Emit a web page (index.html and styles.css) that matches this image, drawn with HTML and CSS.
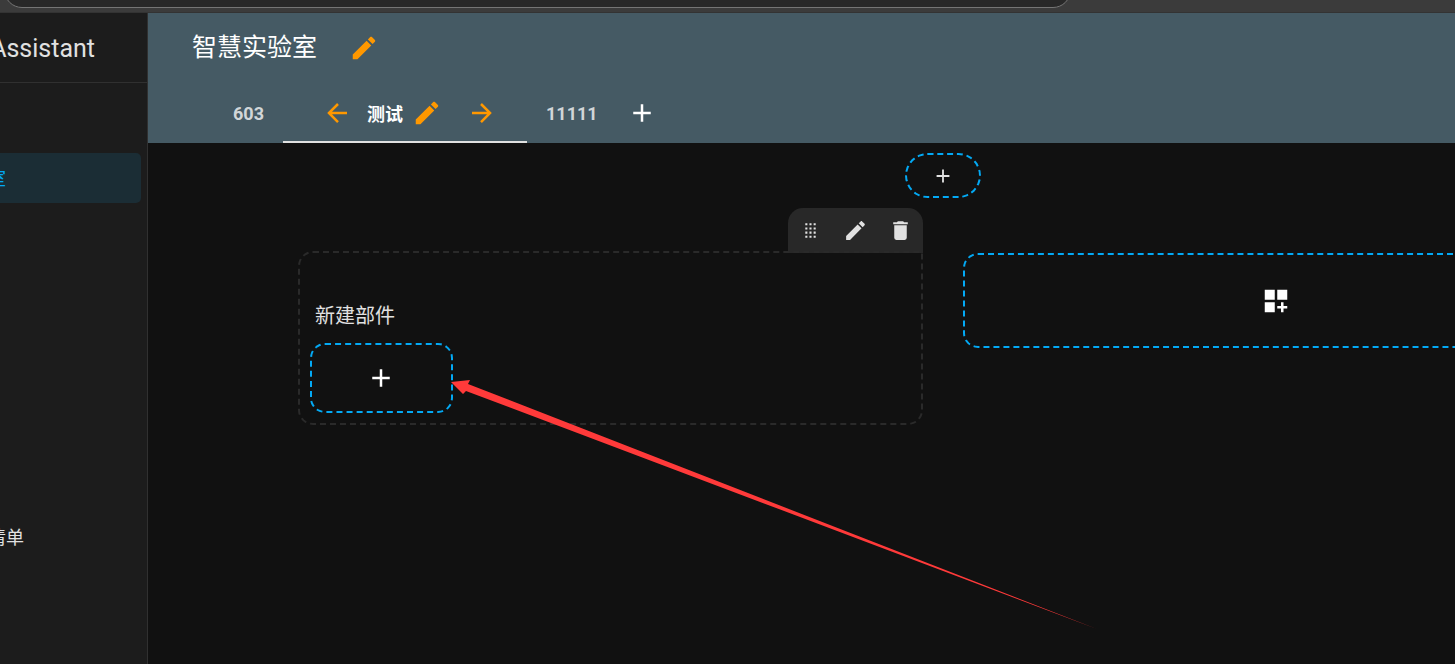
FILE: index.html
```html
<!DOCTYPE html>
<html lang="zh-CN">
<head>
	<meta charset="UTF-8">
	<title>智慧实验室</title>
	<link rel="stylesheet" href="styles.css">
</head>
<body>
	<div class="browser"><div class="address"></div></div>
	<div class="app">
		<aside class="sidebar">
			<div class="brand"><span>Home Assistant</span></div>
			<nav class="menu">
				<a class="item active" href="#">智慧实验室</a>
				<a class="item todo" href="#">待办清单</a>
			</nav>
		</aside>
		<main class="main">
			<header class="header">
				<div class="title">
					<h1>智慧实验室</h1>
					<button class="icon" aria-label="编辑标题">
						<svg viewBox="0 0 24 24"><path d="M20.71,7.04C21.1,6.65 21.1,6 20.71,5.63L18.37,3.29C18,2.9 17.35,2.9 16.96,3.29L15.12,5.12L18.87,8.87M3,17.25V21H6.75L17.81,9.93L14.06,6.18L3,17.25Z"/></svg>
					</button>
				</div>
				<div class="tabs">
					<a class="tab" href="#">603</a>
					<div class="tab current">
						<button class="icon" aria-label="左移">
							<svg viewBox="0 0 24 24"><path d="M20,11V13H8L13.5,18.5L12.08,19.92L4.16,12L12.08,4.08L13.5,5.5L8,11H20Z"/></svg>
						</button>
						<a class="name" href="#">测试</a>
						<button class="icon" aria-label="编辑视图">
							<svg viewBox="0 0 24 24"><path d="M20.71,7.04C21.1,6.65 21.1,6 20.71,5.63L18.37,3.29C18,2.9 17.35,2.9 16.96,3.29L15.12,5.12L18.87,8.87M3,17.25V21H6.75L17.81,9.93L14.06,6.18L3,17.25Z"/></svg>
						</button>
						<button class="icon right" aria-label="右移">
							<svg viewBox="0 0 24 24"><path d="M4,11V13H16L10.5,18.5L11.92,19.92L19.84,12L11.92,4.08L10.5,5.5L16,11H4Z"/></svg>
						</button>
					</div>
					<a class="tab" href="#">11111</a>
					<button class="icon white" aria-label="添加视图">
						<svg viewBox="0 0 24 24"><path d="M19,13H13V19H11V13H5V11H11V5H13V11H19V13Z"/></svg>
					</button>
				</div>
			</header>
			<div class="view">
				<button class="add add-badge" aria-label="添加徽章">
					<svg viewBox="0 0 24 24"><path d="M19,13H13V19H11V13H5V11H11V5H13V11H19V13Z"/></svg>
				</button>
				<div class="sections">
					<div class="column">
						<div class="tools">
							<button aria-label="拖动">
								<svg viewBox="0 0 24 24"><path d="M7 5h2v2H7zM11 5h2v2h-2zM15 5h2v2h-2zM7 9h2v2H7zM11 9h2v2h-2zM15 9h2v2h-2zM7 13h2v2H7zM11 13h2v2h-2zM15 13h2v2h-2zM7 17h2v2H7zM11 17h2v2h-2zM15 17h2v2h-2z"/></svg>
							</button>
							<button aria-label="编辑">
								<svg viewBox="0 0 24 24"><path d="M20.71,7.04C21.1,6.65 21.1,6 20.71,5.63L18.37,3.29C18,2.9 17.35,2.9 16.96,3.29L15.12,5.12L18.87,8.87M3,17.25V21H6.75L17.81,9.93L14.06,6.18L3,17.25Z"/></svg>
							</button>
							<button aria-label="删除">
								<svg viewBox="0 0 24 24"><path d="M19,4H15.5L14.5,3H9.5L8.5,4H5V6H19M6,19A2,2 0 0,0 8,21H16A2,2 0 0,0 18,19V7H6V19Z"/></svg>
							</button>
						</div>
						<section class="section">
							<h2>新建部件</h2>
							<div class="cards">
								<button class="add add-card" aria-label="添加卡片">
									<svg viewBox="0 0 24 24"><path d="M19,13H13V19H11V13H5V11H11V5H13V11H19V13Z"/></svg>
								</button>
							</div>
						</section>
					</div>
					<button class="add add-section" aria-label="添加部件">
						<svg viewBox="0 0 24 24"><path d="M3,3H11V11H3V3M13,3H21V11H13V3M3,13H11V21H3V13M16,13H18V16H21V18H18V21H16V18H13V16H16V13Z"/></svg>
					</button>
				</div>
			</div>
			<svg class="arrow" width="648" height="252" viewBox="0 0 648 252"><path d="M0 3L19 1L17 5L646 250L15 12L12 15Z"/></svg>
		</main>
	</div>
</body>
</html>
```
FILE: styles.css
```css
*{margin:0;padding:0;box-sizing:border-box;}
body{height:100vh;display:flex;flex-direction:column;overflow:hidden;background:#111;color:#e1e1e1;font-family:Roboto,"Noto Sans CJK SC",sans-serif;}
a{color:inherit;text-decoration:none;}
button{border:0;background:none;color:inherit;display:flex;align-items:center;justify-content:center;cursor:pointer;}
svg{display:block;fill:currentColor;}

.browser{height:13px;flex:none;overflow:hidden;background:#3b3b3b;border-bottom:1px solid #333;}
.address{width:73.3%;height:36px;margin:-28px 0 0 4px;background:#282828;border:1px solid #757575;border-radius:18px;}
.app{flex:1;display:flex;min-height:0;}

/* 侧边栏 */
.sidebar{width:148px;flex:none;overflow:hidden;background:#1c1c1c;border-right:1px solid #303030;}
.brand{height:70px;display:flex;align-items:center;justify-content:flex-end;padding:2px 52px 0 0;border-bottom:1px solid #303030;font-size:25px;white-space:nowrap;}
.menu{padding:70px 6px 0 0;}
.item{height:50px;display:flex;align-items:center;justify-content:flex-end;padding-bottom:2px;font-size:18px;white-space:nowrap;}
.active{padding-right:135px;background:#1b2d35;border-radius:0 5px 5px 0;color:#03a9f4;}
.todo{margin-top:309px;padding-right:117px;}

/* 顶栏 */
.main{flex:1;min-width:0;position:relative;overflow:hidden;}
.header{height:130px;background:#455a64;color:#fff;}
.title{height:70px;display:flex;align-items:center;padding-left:44px;gap:32px;}
.title h1{font-size:25px;font-weight:400;line-height:30px;}
.icon{color:#ff9800;}
.icon svg{width:30px;height:30px;}
.white{color:#fff;padding:0 10px;}
.tabs{height:60px;display:flex;padding-left:66px;font-size:18px;font-weight:700;}
.tab{display:flex;align-items:center;padding:0 19px;color:#d1d6d8;}
.current{padding:2px 30px 0 39px;border-bottom:2px solid #e1e1e1;color:#fff;}
.name{margin:0 9px 0 15px;}
.right{margin-left:25px;}

/* 视图内容 */
.view{margin:0 -133px 0 150px;padding-top:10px;}
.add{border:2px dashed #03a9f4;border-radius:15px;color:#fff;}
.add svg{width:30px;height:30px;}
.add-badge{width:76px;height:45px;margin:0 auto;border-radius:23px;color:#e1e1e1;}
.add-badge svg{width:22px;height:22px;}
.sections{display:grid;grid-template-columns:1fr 1fr;gap:40px;padding-top:10px;align-items:start;}
.tools{width:135px;height:45px;display:flex;margin-left:auto;background:#282828;border-radius:15px 15px 0 0;}
.tools button{flex:1;}
.tools svg{width:25px;height:25px;}
.section{margin-top:-2px;padding:45px 10px 10px;border:2px dashed #2a2a2a;border-radius:15px 0 15px 15px;}
.section h2{padding:2px 0 0 5px;font-size:20px;font-weight:400;line-height:33px;}
.cards{display:grid;grid-template-columns:repeat(4,1fr);gap:10px;padding-top:10px;}
.add-card{height:70px;}
.add-section{height:95px;margin-top:45px;}

/* 指示箭头 */
.arrow{position:absolute;left:303px;top:366px;fill:#ff3a3a;pointer-events:none;}
```
